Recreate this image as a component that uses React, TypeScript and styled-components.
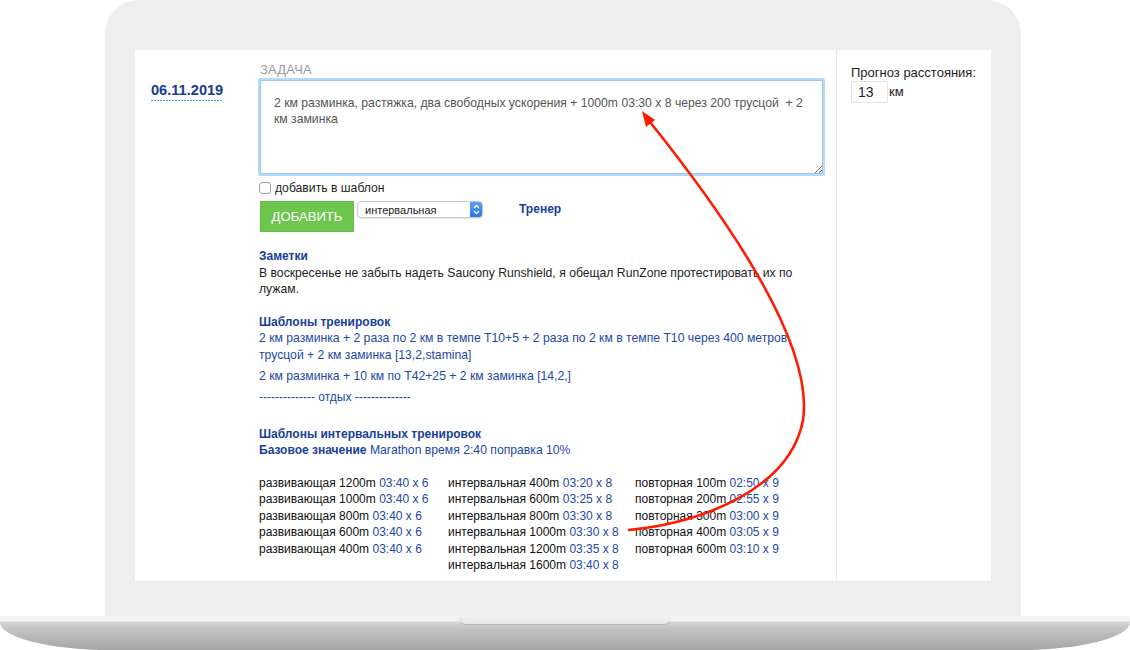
import React from 'react';
import styled, { createGlobalStyle } from 'styled-components';

const Global = createGlobalStyle`
  html, body { margin: 0; padding: 0; background: #ffffff; }
  body {
    width: 1130px; height: 650px; overflow: hidden;
    font-family: "Liberation Sans", Arial, Helvetica, sans-serif;
    color: #1e1e1e;
  }
  * { box-sizing: border-box; }
`;

const Stage = styled.div`
  position: relative;
  width: 1130px;
  height: 650px;
  display: flex;
  flex-direction: column;
`;

const Lid = styled.div`
  margin-left: 105px;
  width: 916px;
  height: 616px;
  padding: 50px 30px 35px;
  background: #eeeeee;
  border-radius: 34px 34px 0 0;
`;

const Screen = styled.div`
  display: flex;
  height: 100%;
  background: #ffffff;
`;

const DateCol = styled.div`
  flex: 0 0 123px;
  padding: 31px 0 0 16px;
`;

const DateLink = styled.span`
  display: inline-block;
  font-size: 14.6px;
  font-weight: bold;
  line-height: 17px;
  color: #183a92;
  padding-bottom: 2px;
  background-image: linear-gradient(to right, #3f9fe6 0 2px, transparent 2px 3px);
  background-size: 3px 1px;
  background-repeat: repeat-x;
  background-position: 0 100%;
`;

const MainCol = styled.div`
  flex: 0 0 578px;
  padding: 12px 11px 0 0;
  display: flex;
  flex-direction: column;
`;

const FieldLabel = styled.div`
  font-size: 13px;
  line-height: 16px;
  color: #9a9a9a;
  padding-left: 2px;
  letter-spacing: 0.2px;
`;

const TaskArea = styled.textarea`
  display: block;
  width: 567px;
  height: 98px;
  margin: 0;
  padding: 15px 8px 0 14px;
  border: 2px solid #b6d9f8;
  box-shadow: inset 0 0 0 1px #98c8f1;
  border-radius: 2px;
  font-family: "Liberation Sans", Arial, Helvetica, sans-serif;
  font-size: 12.2px;
  line-height: 16px;
  color: #555555;
  background: #ffffff;
  outline: none;
  overflow: hidden;
  resize: both;
`;

const CheckRow = styled.label`
  display: flex;
  align-items: center;
  gap: 4px;
  margin-top: 4px;
  height: 16px;
  font-size: 12.2px;
  color: #1e1e1e;
`;

const CheckBox = styled.span`
  width: 12px;
  height: 12px;
  margin-left: 1px;
  border: 1px solid #a0a0a0;
  border-radius: 3px;
  background: #fff;
`;

const Toolbar = styled.div`
  display: flex;
  align-items: flex-start;
  margin-top: 5px;
`;

const AddButton = styled.button`
  width: 94px;
  height: 31px;
  margin: 0 0 0 2px;
  padding: 0;
  border: 1px solid #66bd48;
  background: #6ec64f;
  color: #ffffff;
  font-family: "Liberation Sans", Arial, Helvetica, sans-serif;
  font-size: 13.1px;
  text-transform: uppercase;
  cursor: pointer;
`;

const SelectBox = styled.div`
  display: flex;
  align-items: center;
  justify-content: space-between;
  width: 126px;
  height: 17px;
  margin-left: 3px;
  padding-left: 7px;
  border: 1px solid #c9c9c9;
  border-radius: 4px;
  background: #ffffff;
  box-shadow: 0 1px 1px rgba(0, 0, 0, 0.08);
  font-size: 11px;
  color: #222;
  overflow: hidden;
`;

const Stepper = styled.span`
  display: flex;
  align-items: center;
  justify-content: center;
  width: 13px;
  height: 17px;
  margin-right: -1px;
  border-radius: 0 4px 4px 0;
  background: linear-gradient(#5aa6f7, #2b72e2);
`;

const TrainerLink = styled.a`
  margin-left: 36px;
  font-size: 12px;
  font-weight: bold;
  line-height: 16px;
  color: #17409b;
  text-decoration: none;
`;

const Section = styled.div<{ $gap?: number }>`
  margin-top: ${(p) => p.$gap ?? 16}px;
  width: 560px;
  padding-left: 1px;
  font-size: 12.2px;
  line-height: 16.5px;
`;

const Heading = styled.div`
  font-weight: bold;
  font-size: 12px;
  color: #17409b;
`;

const Plain = styled.div`
  color: #1e1e1e;
`;

const TemplateLink = styled.a<{ $small?: boolean }>`
  display: block;
  margin-bottom: 4.5px;
  color: #1c48a6;
  text-decoration: none;
  font-size: ${(p) => (p.$small ? 12 : 12.2)}px;
`;

const BaseLine = styled.div`
  color: #1c48a6;
  b { color: #17409b; font-size: 12px; }
`;

const PaceGrid = styled.div`
  display: grid;
  grid-template-columns: 189px 187px auto;
  margin-top: 16px;
  padding-left: 1px;
  font-size: 12px;
  line-height: 16.5px;
  color: #111;
`;

const PaceCol = styled.div`
  display: flex;
  flex-direction: column;
`;

const Pace = styled.span`
  color: #1c48a6;
`;

const SidePanel = styled.div`
  flex: 1;
  border-left: 1px solid #e8e8e8;
  padding: 15px 0 0 14px;
  font-size: 13px;
  line-height: 16px;
  color: #1e1e1e;
`;

const KmRow = styled.div`
  display: flex;
  align-items: center;
  gap: 1px;
`;

const KmInput = styled.input`
  width: 37px;
  height: 22px;
  margin: 0;
  padding: 0 0 0 6px;
  border: 1px solid #e4e4e4;
  font-family: "Liberation Sans", Arial, Helvetica, sans-serif;
  font-size: 14px;
  color: #222;
  outline: none;
`;

const Base = styled.div`
  width: 1130px;
  height: 34px;
  display: flex;
  flex-direction: column;
  align-items: center;
  background: linear-gradient(#f6f6f6 0, #f1f1f1 5px, #d6d6d6 6px, #c4c4c4 12px, #a5a5a5 100%);
  border-radius: 0 0 110px 110px / 0 0 28px 28px;
`;

const Notch = styled.div`
  width: 212px;
  height: 8px;
  background: linear-gradient(#f2f2f2, #e6e6e6);
  border-radius: 0 0 8px 8px;
  box-shadow: 0 1px 1px rgba(0, 0, 0, 0.12);
`;

const ArrowLayer = styled.svg`
  position: absolute;
  left: 0;
  top: 0;
  pointer-events: none;
`;

const col1 = ['1200m', '1000m', '800m', '600m', '400m'].map((d) => ({ t: `развивающая ${d}`, p: '03:40 x 6' }));
const col2 = [
  ['400m', '03:20 x 8'],
  ['600m', '03:25 x 8'],
  ['800m', '03:30 x 8'],
  ['1000m', '03:30 x 8'],
  ['1200m', '03:35 x 8'],
  ['1600m', '03:40 x 8'],
].map(([d, p]) => ({ t: `интервальная ${d}`, p }));
const col3 = [
  ['100m', '02:50 x 9'],
  ['200m', '02:55 x 9'],
  ['300m', '03:00 x 9'],
  ['400m', '03:05 x 9'],
  ['600m', '03:10 x 9'],
].map(([d, p]) => ({ t: `повторная ${d}`, p }));

const taskText =
  '2 км разминка, растяжка, два свободных ускорения + 1000m 03:30 x 8 через 200 трусцой  + 2\nкм заминка';

export default function App() {
  return (
    <Stage>
      <Global />
      <Lid>
        <Screen>
          <DateCol>
            <DateLink>06.11.2019</DateLink>
          </DateCol>
          <MainCol>
            <FieldLabel>ЗАДАЧА</FieldLabel>
            <TaskArea readOnly defaultValue={taskText} />
            <CheckRow>
              <CheckBox />
              добавить в шаблон
            </CheckRow>
            <Toolbar>
              <AddButton>Добавить</AddButton>
              <SelectBox>
                интервальная
                <Stepper>
                  <svg width="7" height="11" viewBox="0 0 7 11">
                    <path d="M1 4 L3.5 1.5 L6 4 M1 7 L3.5 9.5 L6 7" fill="none" stroke="#fff" strokeWidth="1.3" />
                  </svg>
                </Stepper>
              </SelectBox>
              <TrainerLink href="#">Тренер</TrainerLink>
            </Toolbar>

            <Section>
              <Heading>Заметки</Heading>
              <Plain>
                В воскресенье не забыть надеть Saucony Runshield, я обещал RunZone протестировать их по лужам.
              </Plain>
            </Section>

            <Section>
              <Heading>Шаблоны тренировок</Heading>
              <TemplateLink href="#">
                2 км разминка + 2 раза по 2 км в темпе Т10+5 + 2 раза по 2 км в темпе Т10 через 400 метров трусцой + 2 км заминка [13,2,stamina]
              </TemplateLink>
              <TemplateLink href="#">2 км разминка + 10 км по Т42+25 + 2 км заминка [14,2,]</TemplateLink>
              <TemplateLink href="#" $small>
                -------------- отдых --------------
              </TemplateLink>
            </Section>

            <Section $gap={16}>
              <Heading>Шаблоны интервальных тренировок</Heading>
              <BaseLine>
                <b>Базовое значение</b> Marathon время 2:40 поправка 10%
              </BaseLine>
            </Section>

            <PaceGrid>
              {[col1, col2, col3].map((col, i) => (
                <PaceCol key={i}>
                  {col.map((r) => (
                    <div key={r.t}>
                      {r.t} <Pace>{r.p}</Pace>
                    </div>
                  ))}
                </PaceCol>
              ))}
            </PaceGrid>
          </MainCol>
          <SidePanel>
            Прогноз расстояния:
            <KmRow>
              <KmInput readOnly defaultValue="13" />
              км
            </KmRow>
          </SidePanel>
        </Screen>
      </Lid>
      <Base>
        <Notch />
      </Base>
      <ArrowLayer width="1130" height="650" viewBox="0 0 1130 650">
        <path
          d="M629 530 C 700 523, 790 490, 803 420 C 812 360, 762 262, 650 122"
          fill="none"
          stroke="#ff1a00"
          strokeWidth="2.6"
          strokeLinecap="round"
        />
        <polygon points="642,111 655,120 646,127" fill="#ff1a00" />
      </ArrowLayer>
    </Stage>
  );
}
